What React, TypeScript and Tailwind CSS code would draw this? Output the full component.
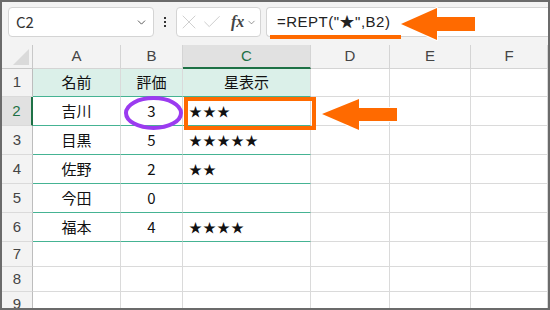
import { ChevronDown, X, Check } from "lucide-react";

const cols = ["A", "B", "C", "D", "E", "F"];
const colW = ["w-[88px]", "w-[62px]", "w-[128px]", "w-[79px]", "w-[81px]", "w-[77px]"];

const rows = [
  { n: 1, h: "h-[28px]", cells: ["名前", "評価", "星表示"], head: true },
  { n: 2, h: "h-[29px]", cells: ["吉川", "3", "★★★"] },
  { n: 3, h: "h-[29px]", cells: ["目黒", "5", "★★★★★"] },
  { n: 4, h: "h-[29px]", cells: ["佐野", "2", "★★"] },
  { n: 5, h: "h-[29px]", cells: ["今田", "0", ""] },
  { n: 6, h: "h-[29px]", cells: ["福本", "4", "★★★★"] },
  { n: 7, h: "h-[25px]", cells: [] },
  { n: 8, h: "h-[25px]", cells: [] },
  { n: 9, h: "h-[25px]", cells: [] },
];

const Toolbar = () => (
  <div className="h-[43px] bg-[#f3f3f3] flex items-start pt-[5px] pl-[6px]">
    <div className="w-[146px] h-[30px] bg-white border border-[#d4d4d4] rounded-[4px] flex items-center justify-between pl-[7px] pr-[5px]">
      <span className="text-[15px] text-[#333]">C2</span>
      <ChevronDown size={13} strokeWidth={1.6} className="text-[#444]" />
    </div>
    <div className="w-[22px] h-[30px] flex flex-col items-center justify-center gap-[2px]">
      <div className="w-[2px] h-[2px] bg-[#333]" />
      <div className="w-[2px] h-[2px] bg-[#333]" />
      <div className="w-[2px] h-[2px] bg-[#333]" />
    </div>
    <div className="w-[85px] h-[30px] bg-white border border-[#d4d4d4] rounded-[4px] flex items-center">
      <X size={24} strokeWidth={0.8} className="text-[#c4c4c4]" />
      <Check size={22} strokeWidth={0.9} className="text-[#c4c4c4]" />
      <span className="ml-[8px] text-[16px] italic font-bold text-[#444] font-['Liberation_Serif',serif]">fx</span>
      <ChevronDown size={11} strokeWidth={1.5} className="text-[#666] ml-[2px]" />
    </div>
    <div className="ml-[5px] flex-1 h-[30px] bg-white border border-[#d4d4d4] border-r-0 rounded-l-[4px] flex items-center pl-[10px]">
      <span className="text-[15px] text-[#222] tracking-[0.5px] font-['Liberation_Sans','Noto_Sans_CJK_JP',sans-serif]">=REPT("★",B2)</span>
    </div>
  </div>
);

const Corner = () => (
  <div className="w-[31px] h-[24px] bg-[#f3f3f3] border-r border-b border-[#c8c8c8] flex items-end justify-end p-[3px]">
    <svg width="16" height="16" viewBox="0 0 16 16">
      <polygon points="16,0 16,16 0,16" fill="#dadada" />
    </svg>
  </div>
);

export default function App() {
  return (
    <div className="relative w-[550px] h-[310px] border-2 border-[#6b6b6b] bg-white overflow-hidden font-['Noto_Sans_CJK_JP',sans-serif]">
      <Toolbar />
      <div className="flex">
        <Corner />
        {cols.map((c, i) => (
          <div
            key={c}
            className={`${colW[i]} h-[24px] flex items-center justify-center text-[15px] font-['Liberation_Sans',sans-serif] ${
              c === "C"
                ? "bg-[#e1e1e1] text-[#1e7145] border-b-2 border-b-[#1e7145] border-r border-r-[#d4d4d4]"
                : "bg-[#f3f3f3] text-[#444] border-r border-b border-[#d4d4d4]"
            }`}
          >
            {c}
          </div>
        ))}
      </div>
      {rows.map((r) => (
        <div key={r.n} className={`flex ${r.h}`}>
          <div
            className={`w-[31px] shrink-0 flex items-center justify-center text-[15px] font-['Liberation_Sans',sans-serif] border-b border-b-[#dadada] ${
              r.n === 2
                ? "bg-[#e1e1e1] text-[#1e7145] border-r-2 border-r-[#1e7145]"
                : "bg-[#f3f3f3] text-[#444] border-r border-r-[#bdbdbd]"
            }`}
          >
            {r.n}
          </div>
          {cols.map((c, i) => {
            const inTable = r.n <= 6 && i < 3;
            const v = r.cells[i] ?? "";
            return (
              <div
                key={c}
                className={`${colW[i]} shrink-0 flex items-center border-r border-r-[#dadada] border-b ${
                  inTable ? "border-b-[#45b393]" : "border-b-[#dadada]"
                } ${r.head && inTable ? "bg-[#dbf0e9]" : ""} ${
                  i === 2 && !r.head ? "justify-start pl-[6px] text-[13px] tracking-[1px]" : "justify-center text-[15px]"
                } text-[#111]`}
              >
                {v}
              </div>
            );
          })}
        </div>
      ))}
      <svg className="absolute left-0 top-0 pointer-events-none" width="550" height="310">
        <rect x="268" y="33" width="131" height="4" fill="#ff6a00" />
        <polygon
          points="399,22 435,6 435,15 473,15 473,29 435,29 435,38"
          fill="#ff6a00"
          stroke="#fff"
          strokeWidth="2"
          strokeLinejoin="round"
          paintOrder="stroke"
        />
        <rect x="184" y="97" width="128" height="29" fill="none" stroke="#ff6a00" strokeWidth="4" />
        <polygon
          points="320,112 357,97 357,106 395,106 395,119 357,119 357,128"
          fill="#ff6a00"
          stroke="#fff"
          strokeWidth="2"
          strokeLinejoin="round"
          paintOrder="stroke"
        />
        <ellipse cx="151.5" cy="111" rx="27.5" ry="15" fill="none" stroke="#9b3bf0" strokeWidth="4" />
      </svg>
    </div>
  );
}
